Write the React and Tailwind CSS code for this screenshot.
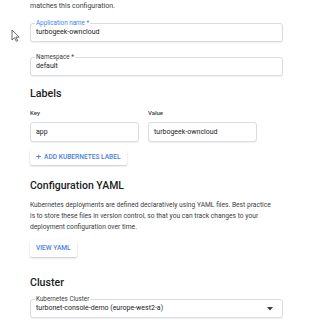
import React from "react";

const boxClass =
  "relative rounded-[3px] border border-[#dadce0] bg-white flex items-center px-[5px] text-[7px] text-[#202124] shadow-[0_1px_1px_rgba(0,0,0,0.06)]";

function OutlinedField({ label, value, focused, select, className = "" }) {
  return (
    <div
      className={`${boxClass} ${focused ? "border-[#4285f4] border-[1.5px] shadow-[0_0_2px_rgba(66,133,244,0.5)]" : ""} ${className}`}
    >
      <span
        className={`absolute left-[4px] -top-[4px] bg-white px-[1px] text-[6.3px] leading-none ${focused ? "text-[#4285f4]" : "text-[#3c4043]"}`}
      >
        {label}
      </span>
      <span className="flex-1 truncate">{value}</span>
      {select && (
        <svg width="6" height="4" viewBox="0 0 6 4" className="mr-[4px]">
          <path d="M0 0h6L3 3.5z" fill="#3c4043" />
        </svg>
      )}
    </div>
  );
}

function Button({ children, className = "" }) {
  return (
    <div
      className={`flex items-center px-[6px] rounded-[2px] bg-white text-[#4b7fe0] text-[6.6px] font-medium shadow-[0_1px_2px_rgba(60,64,67,0.3)] ${className}`}
    >
      {children}
    </div>
  );
}

export default function App() {
  return (
    <div className="relative w-[320px] h-[320px] overflow-hidden bg-white font-['Roboto',sans-serif] text-[#202124]">
      {/* mouse cursor */}
      <svg className="absolute left-[11px] top-[29px]" width="9" height="13" viewBox="0 0 9 13">
        <path d="M1 1v10l2.5-2.3 1.8 3.6 1.4-.7-1.8-3.5H8.2z" fill="#fff" stroke="#444" strokeWidth="0.8" strokeLinejoin="round" />
      </svg>

      <div className="pl-[30px] pr-[37px]">
        <p className="text-[7px] leading-[11px] text-[#3c4043] pt-[1px]">matches this configuration.</p>

        <OutlinedField className="mt-[11px] h-[19px]" label="Application name *" value="turbogeek-owncloud" focused />
        <OutlinedField className="mt-[15px] h-[19px]" label="Namespace *" value="default" />

        <h2 className="mt-[12px] text-[10.7px] font-medium leading-[12px]">Labels</h2>
        <div className="mt-[9px] flex gap-[9px]">
          <div className="w-[109px]">
            <div className="text-[6px] font-medium text-[#3c4043] leading-[8px]">Key</div>
            <div className={`${boxClass} mt-[5px] h-[20px]`}>app</div>
          </div>
          <div className="w-[109px]">
            <div className="text-[6px] font-medium text-[#3c4043] leading-[8px]">Value</div>
            <div className={`${boxClass} mt-[5px] h-[20px]`}>turbogeek-owncloud</div>
          </div>
        </div>
        <div className="mt-[8px] flex">
          <Button className="h-[15px]">
            <span className="text-[9px] font-normal mr-[3px] leading-none">+</span>
            ADD KUBERNETES LABEL
          </Button>
        </div>

        <h2 className="mt-[15px] text-[10.5px] font-medium leading-[12px]">Configuration YAML</h2>
        <p className="mt-[8px] text-[6.7px] leading-[11px] text-[#3c4043]">
          <span className="block whitespace-nowrap">Kubernetes deployments are defined declaratively using YAML files. Best practice</span>
          <span className="block whitespace-nowrap">is to store these files in version control, so that you can track changes to your</span>
          <span className="block whitespace-nowrap">deployment configuration over time.</span>
        </p>
        <div className="mt-[7px] flex">
          <Button className="h-[17px]">VIEW YAML</Button>
        </div>

        <h2 className="mt-[20px] text-[10.6px] font-medium leading-[12px]">Cluster</h2>
        <OutlinedField className="mt-[10px] h-[19px]" label="Kubernetes Cluster" value="turbonet-console-demo (europe-west2-a)" select />
      </div>
    </div>
  );
}
